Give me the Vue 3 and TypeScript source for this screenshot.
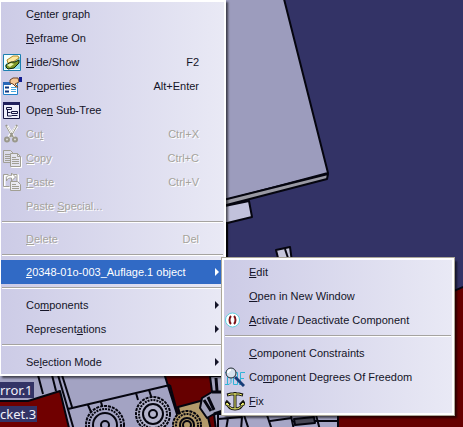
<script setup lang="ts">
type IconName = 'hide' | 'props' | 'tree' | 'cut' | 'copy' | 'paste' | 'power' | 'dof' | 'anchor'

interface MenuEntry {
  // "&" marks the access key that follows it
  label: string
  shortcut?: string
  icon?: IconName
  disabled?: boolean
  arrow?: boolean
  children?: MenuEntry[][]
}

const menu: MenuEntry[][] = [
  [
    { label: 'C&enter graph' },
    { label: '&Reframe On' },
    { label: '&Hide/Show', shortcut: 'F2', icon: 'hide' },
    { label: 'Pr&operties', shortcut: 'Alt+Enter', icon: 'props' },
    { label: 'Ope&n Sub-Tree', icon: 'tree' },
    { label: 'Cu&t', shortcut: 'Ctrl+X', icon: 'cut', disabled: true },
    { label: '&Copy', shortcut: 'Ctrl+C', icon: 'copy', disabled: true },
    { label: '&Paste', shortcut: 'Ctrl+V', icon: 'paste', disabled: true },
    { label: 'Paste &Special...', disabled: true },
  ],
  [{ label: '&Delete', shortcut: 'Del', disabled: true }],
  [
    {
      label: '&20348-01o-003_Auflage.1 object',
      arrow: true,
      children: [
        [
          { label: '&Edit' },
          { label: '&Open in New Window' },
          { label: '&Activate / Deactivate Component', icon: 'power' },
        ],
        [
          { label: '&Component Constraints' },
          { label: 'Co&mponent Degrees Of Freedom', icon: 'dof' },
          { label: '&Fix', icon: 'anchor' },
        ],
      ],
    },
  ],
  [
    { label: 'Co&mponents', arrow: true },
    { label: 'Represent&ations', arrow: true },
  ],
  [{ label: 'Se&lection Mode', arrow: true }],
]

interface Shape {
  d: string
  fill?: string
  stroke?: string
  width?: number
}

const icons: Record<IconName, Shape[]> = {
  hide: [
    { d: 'M1.500 1.500h17v16h-17z', fill: '#f4ffff', stroke: '#1b7fb0' },
    { d: 'M3 12l5-6 10-2v12H3z', fill: '#8fdcec' },
    { d: 'M5 7l6-4 5 0 1 2-6 4-5 1z', fill: '#ffe9a0', stroke: '#b08a28' },
    { d: 'M4 12l5-3 4 0 4-2v3l-5 5-6 1-2-2z', fill: '#7f9a28', stroke: '#10240a' },
    { d: 'M5 12l4-2 3 1-4 3z', fill: '#eef4b0' },
  ],
  props: [
    { d: 'M1.500 5.500h14v12h-14z', fill: '#fff', stroke: '#2080c8' },
    { d: 'M1 5h8v3H1z', fill: '#2868b8' },
    { d: 'M3 10.500h4M3 14.500h4', stroke: '#103880', width: 2 },
    { d: 'M9 10.500h5M9 12.500h5M9 14.500h5', stroke: '#48a8e0' },
    { d: 'M8 3l3-2 5 0 1 4-4 2 3 3-2 0-3-3-3-1z', fill: '#f4c898', stroke: '#6a4428' },
    { d: 'M17 0h3v5h-3z', fill: '#101c90' },
  ],
  tree: [
    { d: 'M1.500 1.500h16v16h-16z', fill: '#eeeefa', stroke: '#151540' },
    { d: 'M1 1h17v3H1z', fill: '#20205c' },
    { d: 'M5.500 8v7h4M5.500 11.500h3', stroke: '#151540' },
    { d: 'M4.500 6.500h5v2h-5zM9.500 10.500h6v2h-6zM9.500 14.500h6', stroke: '#151540' },
  ],
  cut: [
    { d: 'M5 1l7 12M15 1L7 12', stroke: '#fff', width: 3 },
    { d: 'M4 0l7 12M15 0L8 12', stroke: '#9a988c', width: 2 },
    { d: 'M5 1l4 7M14 1l-4 7', stroke: '#fff' },
    { d: 'M3 14.500a2 2 0 1 0 4 0a2 2 0 1 0-4 0M11 14.500a2 2 0 1 0 4 0a2 2 0 1 0-4 0', fill: '#deddd8', stroke: '#9a988c', width: 2 },
  ],
  copy: [
    { d: 'M1.500 1.500h7l3 3v9h-10z', fill: '#dcdcea', stroke: '#a19f94' },
    { d: 'M3 5.500h5M3 7.500h5M3 9.500h5M3 11.500h5', stroke: '#a19f94' },
    { d: 'M9.500 5.500h7l3 3v10h-10z', fill: '#eeeef4', stroke: '#fff' },
    { d: 'M8.500 4.500h7l3 3v10h-10zM15.500 4.500v3h3', fill: '#e4e4ee', stroke: '#a19f94' },
    { d: 'M10 8.500h4M10 10.500h7M10 12.500h7M10 14.500h7', stroke: '#a19f94' },
  ],
  paste: [
    { d: 'M2.500 2.500h5M12 2.500h4v6M2.500 2.500v12h6', stroke: '#fff', width: 2 },
    { d: 'M1.500 1.500h5M11 1.500h4v7M1.500 1.500v12h6', stroke: '#a19f94' },
    { d: 'M4.500 5.500c0-3 2-3 5-3V0l4 4-4 4V5c-2 0-4 0-5 3z', fill: '#fff', stroke: '#a19f94' },
    { d: 'M8.500 8.500h7l3 3v6h-10z', fill: '#eaeaf2', stroke: '#a19f94' },
    { d: 'M10 11.500h4M10 13.500h7M10 15.500h7', stroke: '#a19f94' },
  ],
  power: [
    { d: 'M0.500 9a7 7 0 1 0 14 0a7 7 0 1 0-14 0', fill: '#fff', stroke: '#5cd0de' },
    { d: 'M6 5c-2 2-2 6 0 8M9 5c2 2 2 6 0 8', stroke: '#7c1418', width: 2 },
  ],
  dof: [
    { d: 'M0 4.500h4l2 2v8l-2 2H0M2.500 4v12M8.500 4.500h4v12h-4zM15.500 17V4.500H20M15 10.500h4M14 16.500h3', stroke: '#30b4d8' },
    { d: 'M1 5a5 5 0 1 0 10 0a5 5 0 1 0-10 0', fill: '#d6e2ee', stroke: '#222a30' },
    { d: 'M3 5a3 3 0 0 1 3-3', stroke: '#fff', width: 2 },
    { d: 'M10 9l9 9', stroke: '#173c78', width: 3 },
  ],
  anchor: [
    { d: 'M10 0v18M2 3l4-1h8l4 1M2 11c1 4 4 6 8 6s7-2 8-6M0 13l2-3 3 3M20 13l-2-3-3 3', stroke: '#161610', width: 3 },
    { d: 'M10 1v16M3 3l3-1h8l3 1M2 11c1 4 4 6 8 6s7-2 8-6M1 13l1-2 2 2M19 13l-1-2-2 2', stroke: '#f8f870', width: 1 },
  ],
}

const bolts = [
  { x: 105, y: 425, r: 19, body: '#a5a5c4' },
  { x: 153, y: 414, r: 17, body: '#b4b4cc' },
  { x: 187, y: 425, r: 14, body: '#b39a6a' },
]

function split(label: string): [string, string, string] {
  const at = label.indexOf('&')
  return [label.slice(0, at), label[at + 1], label.slice(at + 2)]
}
</script>

<template>
  <main class="viewport">
    <svg class="scene" viewBox="0 0 463 427" preserveAspectRatio="xMinYMin slice" aria-hidden="true">
      <rect width="463" height="427" fill="#333366" />
      <g stroke="#05050f" stroke-width="2" stroke-linejoin="round">
        <path d="M215 -5H283L328 173L215 203z" fill="#9c9cbd" />
        <path d="M328 174L327 179L215 208V202z" fill="#9a9aa4" />
        <path d="M215 208L249 201L252 217L215 226z" fill="#c2c2dc" />
        <path d="M227 222V260" fill="none" />
        <path d="M276 250L290 247L292 262H279z" fill="#c6c6dc" />
        <path d="M285 249L289 261" />
        <path d="M440 297L470 284V440H150V360H440z" fill="#660000" />
        <path d="M-5 370H163L182 430H-5z" fill="#a3a3c3" />
        <path d="M28 401L60 391L70 432H-5V401z" fill="#700000" />
        <path d="M38 375L43 394M52 375L56 391M58 375L74 430M68 409L170 385M170 385L182 430M62 375L72 407M136 393L138 400M149 390L152 399M88 405L91 412M101 402L103 409" fill="none" />
        <path d="M178 407L204 400L211 430H184z" fill="#b39a6a" />
        <path d="M210 376H226V430H216L214 414L207 418L200 408L202 398L212 392z" fill="#a3a3bd" />
        <path d="M204 400L211 411M208 397L214 410M212 392H224M214 414L226 410M216 378L217 391" fill="none" stroke-width="3" />
        <path d="M218 414H338V430H218z" fill="#a6a6c6" />
        <path d="M218 419L242 417L241 430M244 415L249 430M267 415L272 430M270 421L292 418M291 416L294 430M292 422L314 418M316 415L320 430M315 421H338M228 418L226 430" fill="none" />
        <path d="M294 419L314 417L315 423L295 425z" fill="#474755" />
      </g>
      <g v-for="bolt in bolts" :key="bolt.x" fill="none" stroke="#05050f" stroke-width="2">
        <circle :cx="bolt.x" :cy="bolt.y" :r="bolt.r" :fill="bolt.body" stroke-dasharray="3 1" />
        <circle :cx="bolt.x" :cy="bolt.y" :r="bolt.r - 3" stroke-dasharray="2 1" />
        <circle :cx="bolt.x" :cy="bolt.y" :r="bolt.r - 7" />
        <circle :cx="bolt.x" :cy="bolt.y" r="4" />
      </g>
    </svg>
    <div class="tags">
      <span class="tag">rror.1</span>
      <span class="tag">cket.3</span>
    </div>

    <nav class="menu root" aria-label="Context menu">
      <ul v-for="(group, g) in menu" :key="g" class="group">
        <li v-for="item in group" :key="item.label" class="row">
          <button type="button" class="item" :class="{ active: item.children }" :disabled="item.disabled">
            <span class="slot">
              <svg v-if="item.icon" class="icon" viewBox="0 -1 20 20" aria-hidden="true">
                <path v-for="(s, i) in icons[item.icon]" :key="i" :d="s.d" :fill="s.fill ?? 'none'" :stroke="s.stroke ?? 'none'" :stroke-width="s.width ?? 1" />
              </svg>
            </span>
            <span class="label">{{ split(item.label)[0] }}<u>{{ split(item.label)[1] }}</u>{{ split(item.label)[2] }}</span>
            <span class="shortcut">{{ item.shortcut }}</span>
            <span class="slot end"><i v-if="item.arrow" class="arrow"></i></span>
          </button>

          <div v-if="item.children" class="menu sub">
            <ul v-for="(subGroup, sg) in item.children" :key="sg" class="group">
              <li v-for="child in subGroup" :key="child.label" class="row">
                <button type="button" class="item">
                  <span class="slot">
                    <svg v-if="child.icon" class="icon" viewBox="0 -1 20 20" aria-hidden="true">
                      <path v-for="(s, i) in icons[child.icon]" :key="i" :d="s.d" :fill="s.fill ?? 'none'" :stroke="s.stroke ?? 'none'" :stroke-width="s.width ?? 1" />
                    </svg>
                  </span>
                  <span class="label">{{ split(child.label)[0] }}<u>{{ split(child.label)[1] }}</u>{{ split(child.label)[2] }}</span>
                </button>
              </li>
            </ul>
          </div>
        </li>
      </ul>
    </nav>
  </main>
</template>

<style>
body {
  margin: 0;
  background: #333366;
}
</style>

<style scoped>
.viewport {
  position: relative;
  min-height: 100vh;
  overflow: hidden;
  font-family: "Liberation Sans", Arial, sans-serif;
  font-size: 11px;
}

.scene {
  position: absolute;
  inset: 0;
  width: 100%;
  height: 100%;
}

.tags {
  position: absolute;
  left: 0;
  top: 382px;
  display: flex;
  flex-direction: column;
  align-items: flex-start;
  gap: 8px;
}

.tag {
  padding-right: 1px;
  background: #333366;
  color: #f0f0fa;
  font-size: 13px;
  line-height: 16px;
  font-family: "Noto Sans", sans-serif;
}

.menu {
  position: relative;
  box-sizing: border-box;
  border: 2px solid #fff;
  background: linear-gradient(90deg, #cccbe6, #e9e9f5);
}

.root {
  width: 226px;
  border-left-width: 1px;
  box-shadow: 2px 2px 2px rgba(0, 0, 0, 0.6);
}

.sub {
  position: absolute;
  top: -2px;
  left: calc(100% - 2px);
  z-index: 1;
  width: 232px;
  box-shadow: 0 0 0 1px #aca899, 3px 3px 2px rgba(0, 0, 0, 0.6);
}

.group {
  margin: 0;
  padding: 0;
  list-style: none;
}

.group + .group::before {
  content: "";
  display: block;
  height: 1px;
  margin: 3px 1px 4px;
  border-bottom: 1px solid #fff;
  background: #a5a3a0;
}

.row {
  position: relative;
}

.item {
  display: grid;
  grid-template-columns: 25px 1fr auto 25px;
  align-items: center;
  width: 100%;
  height: 24px;
  margin: 0;
  padding: 0;
  border: 0;
  background: none;
  color: #141428;
  font: inherit;
  line-height: 16px;
  text-align: left;
  white-space: nowrap;
}

.item:disabled {
  color: #a5a39c;
  text-shadow: 1px 1px 0 #fff;
}

.item.active {
  background: #316ac5;
  color: #fff;
}

.slot {
  display: flex;
  align-items: center;
}

.icon {
  width: 20px;
  height: 20px;
  margin-left: 1px;
}

.end {
  justify-content: flex-end;
  padding-right: 5px;
}

.arrow {
  border: 4px solid transparent;
  border-right-width: 0;
  border-left-color: currentColor;
}
</style>
